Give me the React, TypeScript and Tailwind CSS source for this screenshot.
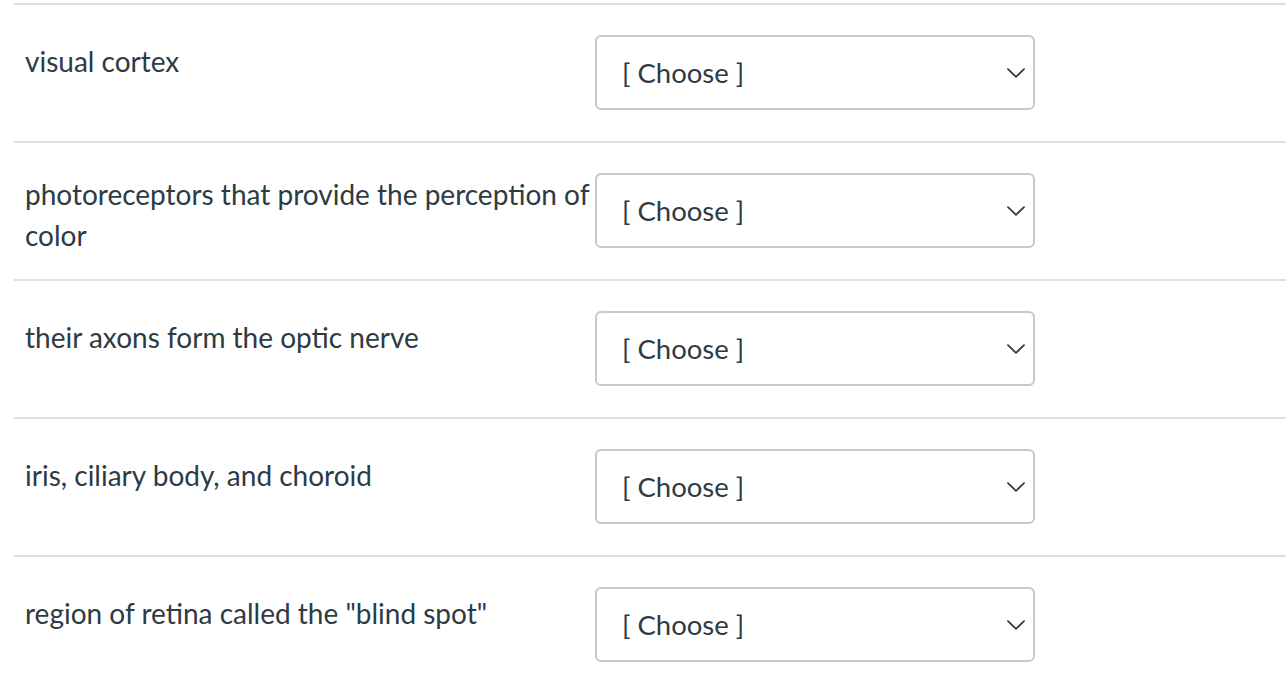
import React from "react";

const rows = [
  { t: "visual cortex", pt: "pt-[36px]" },
  { t: "photoreceptors that provide the perception of color", pt: "pt-[31px]" },
  { t: "their axons form the optic nerve", pt: "pt-[36px]" },
  { t: "iris, ciliary body, and choroid", pt: "pt-[36px]" },
  { t: 'region of retina called the "blind spot"', pt: "pt-[36px]" },
];

function Chevron() {
  return (
    <svg width="18" height="10" viewBox="0 0 18 10" fill="none">
      <path d="M1 1.2 L9 8.8 L17 1.2" stroke="#2d3b45" strokeWidth="1.8" strokeLinecap="round" strokeLinejoin="round" />
    </svg>
  );
}

export default function App() {
  return (
    <div
      className="w-[1286px] h-[700px] bg-white pt-[3px] pl-[14px] text-[#2d3b45] overflow-hidden"
      style={{ fontFamily: "Lato, 'Noto Sans', sans-serif" }}
    >
      {rows.map((r, i) => (
        <div key={i} className="flex h-[138px] border-t-2 border-[#e0e0e0]">
          <div className={`w-[581px] shrink-0 pl-[11px] ${r.pt} text-[28px] leading-[41px]`}>
            {r.t}
          </div>
          <div className="mt-[30px] w-[440px] h-[75px] border-2 border-[#c8c8c8] rounded-[6px] flex items-center justify-between pl-[25px] pr-[8px]">
            <span className="text-[27.5px] leading-none pt-[1px]">[ Choose ]</span>
            <Chevron />
          </div>
        </div>
      ))}
    </div>
  );
}
